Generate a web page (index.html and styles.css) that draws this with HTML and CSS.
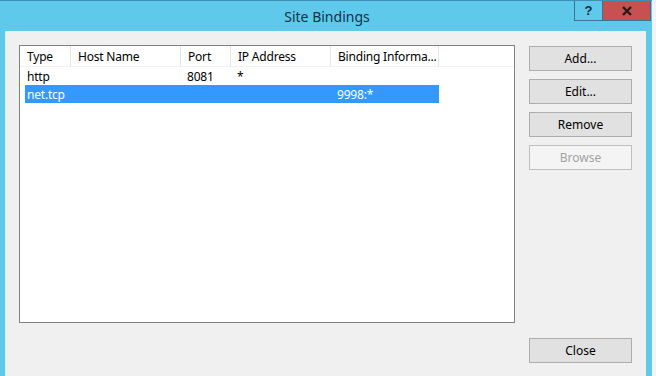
FILE: index.html
```html
<!DOCTYPE html>
<html>
<head>
<meta charset="utf-8">
<link rel="stylesheet" href="styles.css">
</head>
<body>
<div class="window">
  <div class="titlebar">
    <div></div>
    <div class="title">Site Bindings</div>
    <div class="controls">
      <div class="ctl help">?</div>
      <div class="ctl close">
        <svg width="12" height="10" viewBox="0 0 12 10"><path d="M2 1 L10 9 M10 1 L2 9" stroke="#2b1a1a" stroke-width="2.4" fill="none"/></svg>
      </div>
    </div>
  </div>
  <div class="client">
    <div class="main">
      <div class="list">
        <div class="header">
          <div class="hcell c1">Type</div>
          <div class="hcell c2">Host Name</div>
          <div class="hcell c3">Port</div>
          <div class="hcell c4">IP Address</div>
          <div class="hcell c5">Binding Informa...</div>
        </div>
        <div class="row">
          <div class="cell first">http</div>
          <div class="cell"></div>
          <div class="cell">8081</div>
          <div class="cell">*</div>
          <div class="cell"></div>
        </div>
        <div class="row selected">
          <div class="cell first">net.tcp</div>
          <div class="cell"></div>
          <div class="cell"></div>
          <div class="cell"></div>
          <div class="cell">9998:*</div>
        </div>
      </div>
      <div class="buttons">
        <div class="btn">Add...</div>
        <div class="btn">Edit...</div>
        <div class="btn">Remove</div>
        <div class="btn disabled">Browse</div>
      </div>
    </div>
    <div class="footer">
      <div class="btn">Close</div>
    </div>
  </div>
</div>
</body>
</html>
```
FILE: styles.css
```css
html, body {
  margin: 0;
  padding: 0;
  background: #f3f3f3;
  font-family: "Noto Sans", "Liberation Sans", sans-serif;
  font-size: 12px;
  color: #000;
}
.window {
  width: 652px;
  height: 376px;
  background: #5fc9ec;
  border-top: 1px solid #3f8fb5;
  box-sizing: border-box;
  display: flex;
  flex-direction: column;
}
.titlebar {
  height: 30px;
  display: grid;
  grid-template-columns: 1fr auto 1fr;
  align-items: start;
}
.title {
  font-size: 14px;
  color: #13324a;
  line-height: 31px;
  padding-left: 2px;
}
.controls {
  justify-self: end;
  display: flex;
  margin-right: 1px;
}
.ctl {
  height: 20px;
  box-sizing: border-box;
  border: 1px solid #3a7392;
  border-top: none;
  display: flex;
  align-items: center;
  justify-content: center;
}
.help {
  width: 29px;
  font-weight: bold;
  font-size: 13px;
  color: #15263a;
  font-family: "Liberation Sans", sans-serif;
}
.close {
  width: 48px;
  background: #c75050;
  border-left: none;
}
.client {
  flex: 1;
  margin: 0 6px 0 5px;
  background: #f0f0f0;
  border-left: 1px solid #d7eef7;
  padding: 14px 0 0 13px;
  display: flex;
  flex-direction: column;
}
.main {
  display: flex;
  gap: 14px;
}
.list {
  width: 494px;
  height: 276px;
  border: 1px solid #828282;
  background: #fff;
  letter-spacing: -0.2px;
}
.header {
  display: grid;
  grid-template-columns: 51px 110px 50px 100px 108px;
  height: 21px;
  border-bottom: 1px solid #f2f2f2;
  box-sizing: border-box;
}
.hcell {
  border-right: 1px solid #e5e5e5;
  padding-left: 7px;
  padding-top: 1px;
  line-height: 19px;
  white-space: nowrap;
  overflow: hidden;
}
.row {
  display: grid;
  grid-template-columns: 46px 110px 50px 100px 108px;
  margin-left: 5px;
  width: 414px;
  height: 18px;
  line-height: 18px;
}
.row.selected {
  background: #3399ff;
  color: #fff;
}
.cell {
  padding-left: 6px;
  padding-top: 1px;
  white-space: nowrap;
}
.cell.first {
  padding-left: 2px;
}
.buttons {
  display: flex;
  flex-direction: column;
  gap: 8px;
  padding-top: 1px;
}
.btn {
  width: 103px;
  height: 25px;
  box-sizing: border-box;
  border: 1px solid #adadad;
  background: #e1e1e1;
  display: flex;
  align-items: center;
  justify-content: center;
}
.btn.disabled {
  border-color: #bfbfbf;
  background: #f4f4f4;
  color: #a3a3a3;
}
.footer {
  display: flex;
  justify-content: flex-end;
  padding-right: 14px;
  margin-top: 15px;
}
```
